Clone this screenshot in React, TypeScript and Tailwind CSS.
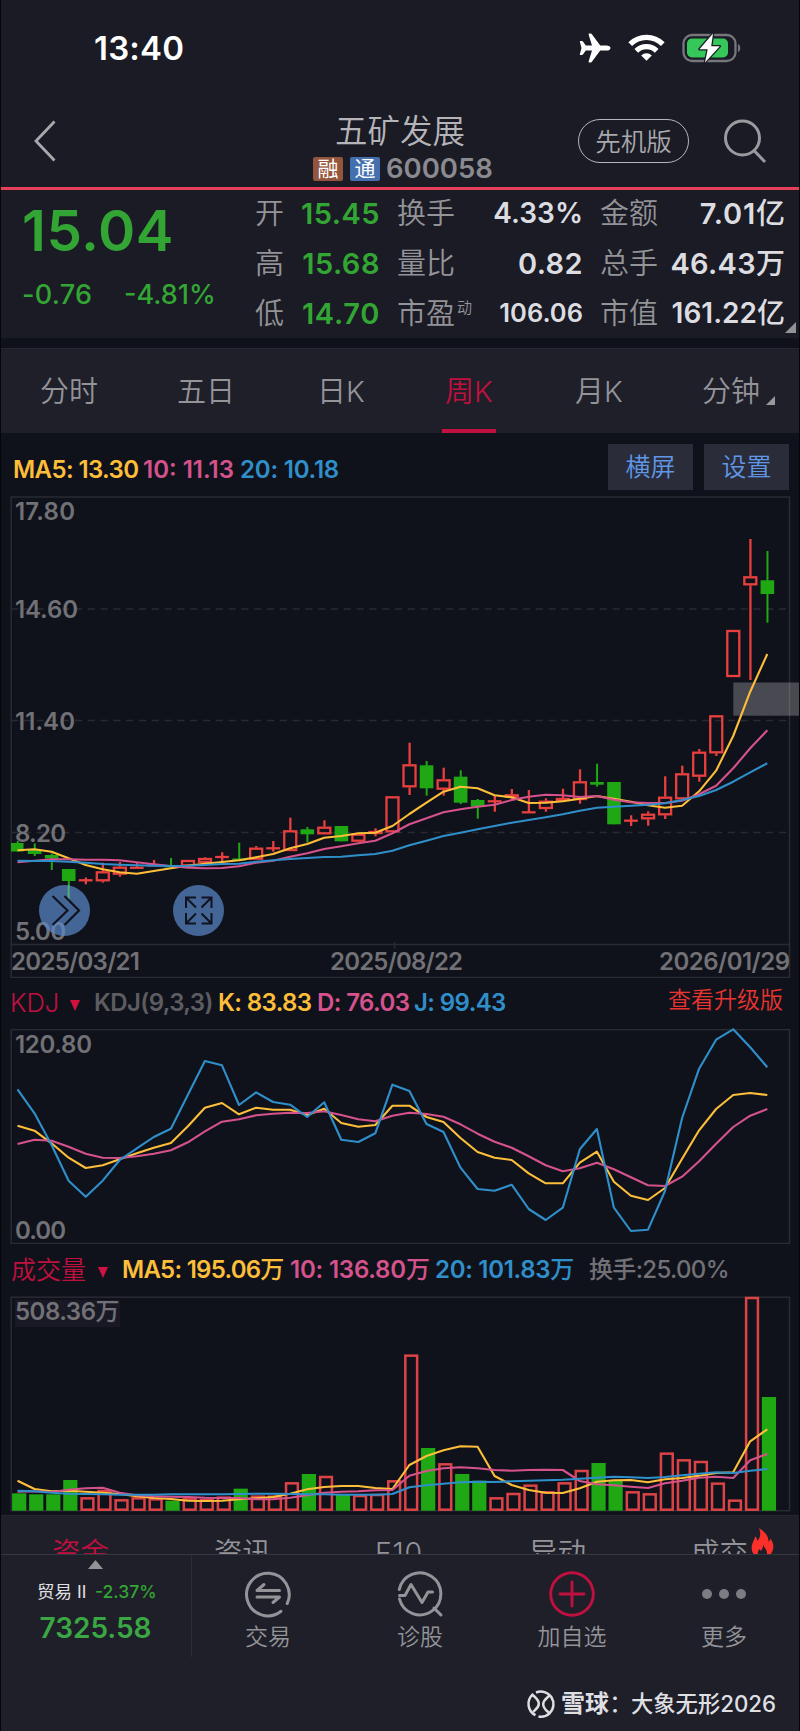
import React from "react";

const UP = "#e8403f";
const DOWN = "#1fa814";
const YELLOW = "#fdbe3a";
const PINK = "#d5528c";
const BLUE = "#2f8fca";

const STEP = 17.04;
const cx = (i: number) => 17.5 + i * STEP;
const vx = (i: number) => 19.1 + i * STEP;

type Candle = ["r" | "g", number, number, number, number];

// kind, high, body top, body bottom, low
const candles: Candle[] = [
  ["g", 841, 843, 851.5, 851.5], ["g", 843.5, 850, 854, 856], ["g", 853.5, 855, 858.5, 870], ["g", 869, 869, 881, 901.5],
  ["r", 877.5, 880.3, 880.3, 884.3], ["r", 862.7, 871.3, 881.3, 882.7], ["r", 862, 866.7, 874.7, 876.7], ["r", 862, 867.8, 867.8, 868],
  ["r", 860, 865.3, 865.3, 866], ["g", 858, 865.3, 865.3, 866], ["r", 860, 860, 866.3, 866.3], ["r", 857.3, 858, 863, 863],
  ["r", 852.3, 857, 857, 861.7], ["g", 842.7, 858.5, 858.5, 860], ["r", 846, 847.7, 859.7, 859.7], ["r", 841, 848.3, 848.3, 851.7],
  ["r", 817.7, 830.3, 851, 851], ["g", 827, 829.3, 834.3, 842.3], ["r", 820.3, 826.7, 834.3, 834.3], ["g", 826, 826, 841.3, 841.3],
  ["r", 833.7, 833.7, 841.7, 841.7], ["r", 828.3, 831, 834, 836.3], ["r", 796.3, 796.3, 832.3, 832.3],
  ["r", 742.7, 764.3, 787.3, 795], ["g", 761, 765.3, 788.3, 795.7], ["r", 767.7, 779.3, 789.7, 795.7], ["g", 770.3, 776.7, 802.7, 804],
  ["g", 799, 800, 806.7, 818.7], ["r", 795.7, 801.3, 801.3, 811.7], ["r", 789, 794.3, 797.7, 799], ["r", 790, 812.3, 812.3, 813],
  ["r", 798.3, 800.7, 809, 811.7], ["r", 788.7, 798, 801, 801], ["r", 769.3, 781.3, 800, 803.7], ["g", 763.7, 782, 784.7, 786.7],
  ["g", 782, 782, 824.3, 824.3], ["r", 815.3, 820.7, 820.7, 826], ["r", 811.3, 813.7, 819.3, 825.7], ["r", 776.3, 796.7, 815.3, 819],
  ["r", 765.7, 773.3, 799.3, 799.3], ["r", 749, 751.7, 776.7, 781.7], ["r", 715.3, 715.3, 753.3, 756], ["r", 630, 630, 677, 677],
  ["r", 539, 576.3, 585.3, 680], ["g", 551, 580.3, 594, 622.7],
];

const priceMa = {
  m5: [451, 448, 455, 475, 495, 508, 517, 521, 513, 505, 497, 491, 486, 481, 472, 462, 445, 432, 413, 408, 400, 398, 378, 342, 308, 275, 260, 265, 286, 292, 309, 308, 304, 296, 288, 296, 305, 316, 323, 317, 274, 212, 108, -25, -138],
  m10: [487, 482, 478, 478, 479, 479, 481, 487, 493, 498, 503, 505, 504, 499, 488, 482, 470, 460, 447, 439, 430, 422, 400, 373, 355, 337, 328, 320, 314, 300, 290, 284, 286, 291, 288, 299, 307, 309, 309, 302, 283, 257, 205, 145, 91],
  m20: [482, 483, 483, 485, 488, 492, 494, 496, 497, 498, 497, 495, 492, 491, 485, 481, 477, 474, 471, 470, 466, 462, 452, 436, 422, 408, 398, 388, 378, 368, 360, 352, 343, 332, 323, 320, 317, 314, 310, 300, 288, 270, 245, 217, 190],
};

const kdj = {
  k: [437, 452, 490, 533, 564, 556, 538, 520, 503, 489, 439, 383, 369, 403, 383, 389, 389, 405, 386, 429, 440, 435, 377, 377, 411, 426, 474, 516, 533, 540, 580, 610, 610, 548, 515, 605, 647, 660, 624, 536, 451, 387, 345, 339, 345],
  d: [492, 479, 482, 500, 521, 533, 534, 529, 521, 511, 487, 454, 425, 418, 406, 401, 398, 399, 394, 405, 418, 424, 407, 398, 402, 410, 433, 461, 485, 503, 529, 556, 574, 565, 548, 568, 592, 616, 618, 590, 544, 491, 441, 407, 387],
  j: [328, 400, 495, 602, 650, 602, 540, 505, 471, 446, 344, 243, 256, 375, 337, 366, 374, 411, 367, 479, 486, 460, 314, 333, 432, 456, 563, 627, 632, 614, 687, 720, 683, 508, 447, 683, 753, 749, 633, 414, 266, 179, 148, 202, 262],
};

const volumes: ["r" | "g", number][] = [
  ["g", 670], ["g", 673], ["g", 673], ["g", 630], ["r", 682], ["r", 660], ["r", 688], ["r", 682], ["r", 685], ["g", 692], ["r", 685], ["r", 687],
  ["r", 680], ["g", 656], ["r", 677], ["r", 677], ["r", 637], ["g", 612], ["r", 618], ["g", 672], ["r", 675], ["r", 672], ["r", 631], ["r", 254],
  ["g", 534], ["r", 580], ["g", 612], ["g", 632], ["r", 682], ["r", 669], ["r", 644], ["r", 664], ["r", 637], ["r", 600], ["g", 579], ["g", 630],
  ["r", 664], ["r", 670], ["r", 548], ["r", 568], ["r", 573], ["r", 638], ["r", 689], ["r", 81], ["g", 381],
];

const volMa = {
  m5: [632, 657, 664, 662, 665, 668, 672, 679, 684, 687, 692, 693, 692, 688, 685, 681, 671, 658, 651, 648, 648, 654, 657, 585, 558, 541, 529, 530, 618, 645, 660, 668, 669, 655, 635, 631, 630, 637, 628, 624, 617, 609, 607, 514, 478],
  m10: [665, 664, 666, 659, 655, 653, 668, 676, 679, 680, 681, 683, 684, 684, 688, 688, 683, 676, 668, 665, 664, 661, 660, 617, 603, 595, 592, 595, 600, 602, 600, 599, 600, 633, 643, 646, 650, 654, 640, 632, 623, 620, 624, 571, 552],
  m20: [662, 664, 668, 671, 672, 673, 674, 674, 674, 673, 673, 673, 673, 672, 671, 671, 672, 673, 673, 674, 674, 674, 672, 652, 646, 641, 637, 635, 636, 634, 632, 631, 629, 626, 623, 620, 622, 624, 621, 616, 611, 607, 609, 602, 597],
};

const path = (values: number[], base: number) =>
  values.map((v, i) => `${i ? "L" : "M"}${cx(i).toFixed(1)} ${(base + v / 3).toFixed(1)}`).join("");

const Line = ({ values, base, color }: { values: number[]; base: number; color: string }) => (
  <path d={path(values, base)} fill="none" stroke={color} strokeWidth="2.100" strokeLinejoin="round" />
);

const Axis = ({ x, y, children, len }: { x: number; y: number; children: React.ReactNode; len: number }) => (
  <text x={x} y={y} textLength={len} className="fill-[#717176] text-[24px] font-semibold">
    {children}
  </text>
);

const StatusBar = () => (
  <div className="flex h-[96px] items-center pl-[94px] pr-[58px]">
    <span className="grow text-[33px] font-semibold leading-none tracking-[0.200px] text-white">13:40</span>
    <svg width="32" height="30" viewBox="0 0 32 30" fill="#fff">
      <path d="M31.5 15c0 1.7-1.8 2.6-4 2.6h-6.3l-8.3 11.2c-.3.4-.7.6-1.2.6h-1.5c-.5 0-.7-.4-.6-.9l3.4-10.9H6.800l-2.900 4c-.2.3-.5.5-.9.500H1.300c-.4 0-.6-.3-.5-.7L2.500 15 .8 8.600c-.1-.4.1-.7.5-.7H3c.4 0 .7.200.9.500l2.900 4H13L9.600 1.500c-.1-.5.1-.9.6-.9h1.500c.5 0 .9.200 1.200.6l8.300 11.200h6.300c2.200 0 4 .9 4 2.600z" />
    </svg>
    <svg className="ml-[17px]" width="37" height="28" viewBox="0 0 37 28" fill="none" stroke="#fff" strokeWidth="5.200">
      <path d="M2.200 10.200a23 23 0 0 1 32.600 0" />
      <path d="M8.300 16.800a14.500 14.500 0 0 1 20.400 0" />
      <path d="M18.500 26.800l-5.300-5.400a7.600 7.600 0 0 1 10.600 0z" fill="#fff" stroke="none" />
    </svg>
    <svg className="ml-[17px]" width="60" height="32" viewBox="0 0 60 32">
      <rect x="1.500" y="3" width="52" height="26" rx="8.500" fill="none" stroke="#77767d" strokeWidth="2.300" />
      <path d="M56 12c3 1.200 3 7 0 8.200z" fill="#77767d" />
      <rect x="5" y="6.500" width="41" height="19" rx="5" fill="#35c759" />
      <path d="M31 1.500L17.500 17.200h8.200L23 30.500 37.800 14.200h-8.600z" fill="#fff" stroke="#1b1c25" strokeWidth="2.600" paintOrder="stroke" strokeLinejoin="round" />
    </svg>
  </div>
);

const Header = () => (
  <header className="flex h-[91px] items-start">
    <svg className="ml-[33px] mt-[23px]" width="24" height="44" viewBox="0 0 24 44" fill="none" stroke="#a9a9ad" strokeWidth="2.800">
      <path d="M21.500 2.500L3 22l18.500 19.500" />
    </svg>
    <div className="ml-[243px] flex w-[200px] flex-col items-center pt-[17px]">
      <h1 className="text-[32.500px] font-[350] leading-[38px] text-[#b5b5b9]">五矿发展</h1>
      <div className="mt-[4px] flex h-[27px] w-full items-center whitespace-nowrap pl-[13px]">
        <span className="flex h-[24px] w-[30px] items-center justify-center rounded-[2px] bg-[#93563c] text-[21px] leading-none text-white">融</span>
        <span className="ml-[7px] flex h-[24px] w-[30px] items-center justify-center rounded-[2px] bg-[#4470b0] text-[21px] leading-none text-white">通</span>
        <span className="ml-[6px] text-[27.500px] font-semibold leading-none text-[#8a8a8f]">600058</span>
      </div>
    </div>
    <div className="ml-[78px] mt-[23px] flex h-[44px] w-[111px] items-center justify-center rounded-full border-[1.500px] border-[#b5b5ba] pt-[2px] text-[25.500px] font-[350] text-[#a8a8ad]">
      先机版
    </div>
    <svg className="ml-[33px] mt-[22px]" width="46" height="46" viewBox="0 0 46 46" fill="none" stroke="#9a9a9f" strokeWidth="3">
      <circle cx="20.500" cy="20" r="17" />
      <path d="M32 32.500L43 44" />
    </svg>
  </header>
);

const Metric = ({ label, sup, value, unit, labelW, w, className }: { label: string; sup?: string; value: string; unit?: string; labelW: string; w: string; className: string }) => (
  <div className={`flex h-[50px] items-center whitespace-nowrap ${w}`}>
    <span className={`text-[29px] font-[350] leading-none text-[#939398] ${labelW}`}>{label}</span>
    {sup && <span className="-mt-[12px] text-[15px] font-[350] leading-none text-[#939398]">{sup}</span>}
    <span className={`grow text-right font-semibold leading-none ${className}`}>
      {value}
      {unit && <span className="font-medium tracking-normal">{unit}</span>}
    </span>
  </div>
);

const Quote = () => (
  <section className="relative flex h-[151px] border-t-[3px] border-[#e63f5c]">
    <div className="w-[255px] pl-[22px] pt-[13px] font-semibold text-[#33a534]">
      <div className="text-[56.500px] leading-[56px] tracking-[0.500px]">15.04</div>
      <div className="mt-[22px] flex text-[27px] font-medium leading-[28px]">
        <span className="w-[102px] tracking-[0.300px]">-0.76</span>
        <span>-4.81%</span>
      </div>
    </div>
    <div className="-mt-[2px] w-[125px]">
      <Metric label="开" value="15.45" labelW="w-[30px]" w="w-[125px]" className="text-[29px] tracking-[0.500px] text-[#33a534]" />
      <Metric label="高" value="15.68" labelW="w-[30px]" w="w-[125px]" className="text-[29px] tracking-[0.500px] text-[#33a534]" />
      <Metric label="低" value="14.70" labelW="w-[30px]" w="w-[125px]" className="text-[29px] tracking-[0.700px] text-[#33a534]" />
    </div>
    <div className="-mt-[2px] ml-[17px] w-[186px]">
      <Metric label="换手" value="4.33%" labelW="w-[60px]" w="w-[186px]" className="text-[28px] text-[#dddde1]" />
      <Metric label="量比" value="0.82" labelW="w-[60px]" w="w-[186px]" className="text-[29px] tracking-[0.400px] text-[#dddde1]" />
      <Metric label="市盈" sup="动" value="106.06" labelW="w-[60px]" w="w-[186px]" className="text-[25.500px] text-[#dddde1]" />
    </div>
    <div className="-mt-[2px] ml-[17px] w-[185px]">
      <Metric label="金额" value="7.01" unit="亿" labelW="w-[58px]" w="w-[185px]" className="text-[29px] tracking-[0.800px] text-[#dddde1]" />
      <Metric label="总手" value="46.43" unit="万" labelW="w-[58px]" w="w-[185px]" className="text-[29px] tracking-[0.300px] text-[#dddde1]" />
      <Metric label="市值" value="161.22" unit="亿" labelW="w-[58px]" w="w-[185px]" className="text-[28px] text-[#dddde1]" />
    </div>
    <svg className="absolute bottom-[5px] right-[4px]" width="11" height="11" viewBox="0 0 11 11">
      <path d="M11 0v11H0z" fill="#929297" />
    </svg>
  </section>
);

const Tabs = () => (
  <nav className="flex h-[85px] border-t border-[#252733] bg-[#1e1f29] text-[29px] font-[350] text-[#939398]">
    <div className="flex w-[138px] items-center justify-center pt-[1px]">分时</div>
    <div className="flex w-[136px] items-center justify-center pt-[1px]">五日</div>
    <div className="flex w-[134px] items-center justify-center pt-[1px]">日K</div>
    <div className="flex w-[122px] flex-col items-center text-[#c0103f]">
      <span className="flex h-[80px] items-center pt-[5px]">周K</span>
      <span className="h-[4px] w-[54px] bg-[#c0103f]" />
    </div>
    <div className="flex w-[138px] items-center justify-center pt-[1px]">月K</div>
    <div className="flex items-center pl-[34px] pt-[1px]">
      分钟
      <svg className="ml-[6px] mt-[17px]" width="9" height="9" viewBox="0 0 9 9">
        <path d="M9 0v9H0z" fill="#98989d" />
      </svg>
    </div>
  </nav>
);

const PriceChart = () => (
  <div className="relative h-[482px]">
    <svg className="block" width="800" height="482" viewBox="0 496 800 482">
      <rect x="11.200" y="497" width="778.300" height="480.500" fill="none" stroke="#292b33" strokeWidth="1.500" />
      <path d="M11 944.500H789M394.500 942V949" stroke="#292b33" strokeWidth="1.500" />
      <path d="M11 609H789M11 720.500H789M11 832.500H789" stroke="#292b33" strokeWidth="1.500" strokeDasharray="7 5.800" />
      <rect x="733.300" y="682.500" width="66" height="33.200" fill="#fff" fillOpacity="0.240" />
      {candles.map(([kind, hi, top, bot, lo], i) => {
        const x = cx(i);
        if (kind === "g") {
          const h = Math.max(bot - top, 2);
          return (
            <g key={i} fill={DOWN}>
              <rect x={x - 0.8} y={hi} width="2" height={lo - hi} />
              <rect x={i ? x - 6.700 : 11} y={top} width={i ? 13.600 : 12.500} height={h} />
            </g>
          );
        }
        const flat = bot - top < 1;
        return (
          <g key={i} stroke={UP} strokeWidth="2.300" fill="none">
            {hi < top && <path d={`M${x + 0.200} ${hi}V${top}`} />}
            {lo > bot && <path d={`M${x + 0.200} ${bot}V${lo}`} />}
            {flat ? <path d={`M${x - 6.900} ${top}H${x + 6.900}`} /> : <rect x={x - 5.900} y={top + 1} width="12" height={Math.max(bot - top - 2, 1)} />}
          </g>
        );
      })}
      <Line values={priceMa.m5} base={700} color={YELLOW} />
      <Line values={priceMa.m10} base={700} color={PINK} />
      <Line values={priceMa.m20} base={700} color={BLUE} />
      <Axis x={15} y={520} len={60}>17.80</Axis>
      <Axis x={15} y={618} len={63}>14.60</Axis>
      <Axis x={15} y={729.500} len={60}>11.40</Axis>
      <Axis x={15} y={841.500} len={51}>8.20</Axis>
      <Axis x={15} y={940} len={51}>5.00</Axis>
      <Axis x={11} y={970} len={129}>2025/03/21</Axis>
      <Axis x={330} y={970} len={133}>2025/08/22</Axis>
      <Axis x={659} y={970} len={131}>2026/01/29</Axis>
    </svg>
    <button className="absolute left-[39px] top-[389px] flex size-[51px] items-center justify-center rounded-full bg-[#5b8acb]/70">
      <svg width="51" height="51" viewBox="0 0 51 51" fill="none" stroke="#10131f" strokeWidth="2.200">
        <path d="M29.500 0V16.500" stroke="#4fae72" strokeWidth="1.500" />
        <path d="M13.500 11L28.500 25.500L13.500 40M25.500 11L40 25.500L25.500 40" />
      </svg>
    </button>
    <button className="absolute left-[173px] top-[389px] flex size-[51px] items-center justify-center rounded-full bg-[#5b8acb]/70">
      <svg width="51" height="51" viewBox="0 0 51 51" fill="none" stroke="#10131f" strokeWidth="2">
        <path d="M23 12.500H13V23M13 12.500L23 22.500M28.500 12.500H38.500V23M38.500 12.500L28.500 22.500M23 38.500H13V28M13 38.500L23 28.500M28.500 38.500H38.500V28M38.500 38.500L28.500 28.500" />
      </svg>
    </button>
  </div>
);

const KdjChart = () => (
  <svg className="block" width="800" height="216" viewBox="0 1028 800 216">
    <rect x="11.200" y="1029.700" width="778.300" height="213.700" fill="none" stroke="#292b33" strokeWidth="1.500" />
    <Line values={kdj.k} base={980} color={YELLOW} />
    <Line values={kdj.d} base={980} color={PINK} />
    <Line values={kdj.j} base={980} color={BLUE} />
    <Axis x={15} y={1052.700} len={77}>120.80</Axis>
    <Axis x={15} y={1239} len={51}>0.00</Axis>
  </svg>
);

const VolumeChart = () => (
  <svg className="block" width="800" height="216" viewBox="0 1296 800 216">
    <rect x="11.200" y="1297.200" width="778.300" height="213.500" fill="none" stroke="#292b33" strokeWidth="1.500" />
    <rect x="15" y="1300" width="105" height="27" fill="#181924" />
    {volumes.map(([kind, v], i) => {
      const y = 1270 + v / 3;
      const x = vx(i);
      return kind === "g" ? (
        <rect key={i} x={x - 7} y={y} width="14.200" height={1510.700 - y} fill={DOWN} />
      ) : (
        <rect key={i} x={x - 5.700} y={y + 1} width="11.800" height={1508.700 - y} fill="none" stroke="#dc4347" strokeWidth="2.500" />
      );
    })}
    <Line values={volMa.m5} base={1270} color={YELLOW} />
    <Line values={volMa.m10} base={1270} color={PINK} />
    <Line values={volMa.m20} base={1270} color={BLUE} />
    <Axis x={15} y={1320} len={104.5}>
      508.36<tspan className="font-medium">万</tspan>
    </Axis>
  </svg>
);

const Caret = ({ className }: { className: string }) => (
  <svg className={className} width="10" height="11" viewBox="0 0 10 11">
    <path d="M0 0h10L5 11z" fill="#cf123f" />
  </svg>
);

const NavItem = ({ label, children }: { label: string; children: React.ReactNode }) => (
  <div className="flex w-[152px] flex-col items-center pt-[14px]">
    <svg width="50" height="50" viewBox="-25 -25 50 50" fill="none">
      {children}
    </svg>
    <span className="mt-[5px] text-[23px] font-[350] leading-[26px] text-[#939398]">{label}</span>
  </div>
);

const BottomTabs = () => (
  <div className="flex h-[39px] overflow-hidden border-t border-[#242630] bg-[#1e1f29] pt-[16px] text-[28.500px] font-[350] leading-[42px] text-[#939398]">
    <span className="w-[161px] pl-[52px] text-[#c0103f]">资金</span>
    <span className="w-[161px] pl-[53px]">资讯</span>
    <span className="w-[155px] pl-[53px] tracking-[0.700px]">F10</span>
    <span className="w-[161px] pl-[52px]">异动</span>
    <span className="w-[111px] pl-[53px]">成交</span>
    <svg className="ml-[2px] -mt-[4px]" width="23" height="31" viewBox="0 0 23 31">
      <path d="M8 0c6 4 10 8 9.300 13.500 1.200-.6 1.800-1.600 2-3C22 14 23 17.500 22 21.500 21 26 17 30 11.500 30 5 30 1 26 .7 20.500.5 15.500 3 13 4.200 8.500c1.300 1 2 2.400 2 4.300C9.500 10 10.200 5 8 0z" fill="#fb302b" />
      <path d="M12 16c.5 3.500 4 5 4 9 0 3-2 5-4.600 5S6.500 28 6.700 25.500c.1-2 1-3 1.600-4.500.8.500 1.200 1.200 1.300 2 1.900-1.600 2.800-4 2.400-7z" fill="#1e1f29" />
    </svg>
  </div>
);

const BottomBar = () => (
  <footer className="flex h-[103px] border-t border-[#353741] bg-[#1e1f29]">
    <div className="flex w-[191px] flex-col items-center">
      <svg className="mt-[5px]" width="15" height="9" viewBox="0 0 15 9">
        <path d="M7.500 0L15 9H0z" fill="#929297" />
      </svg>
      <div className="mt-[10px] flex w-full items-center pl-[37px] text-[17.500px] leading-[26px]">
        <span className="w-[58px] text-[#e0e0e4]">贸易 Ⅱ</span>
        <span className="text-[17.500px] font-medium text-[#33a534]">-2.37%</span>
      </div>
      <div className="mt-[8px] text-[28px] font-semibold leading-[30px] text-[#3aa744]">7325.58</div>
    </div>
    <div className="w-px bg-[#2b2d37]" />
    <NavItem label="交易">
      <path d="M13 17.300A21.300 21.300 0 1 1 19.200 9.500" stroke="#939398" strokeWidth="3" strokeLinecap="round" />
      <path d="M11.500-3.500H-11L-4-9.500M-11 3H11.500L5 8.500" stroke="#939398" strokeWidth="3" strokeLinecap="round" strokeLinejoin="round" />
    </NavItem>
    <NavItem label="诊股">
      <path d="M-20.500 5A21 21 0 1 0-20.700-4.500" stroke="#939398" strokeWidth="3" strokeLinecap="round" />
      <path d="M-20.500 1.500H-15L-9-9.500L2 8.500L8-2H12.500M14 14L21 21" stroke="#939398" strokeWidth="3" strokeLinecap="round" strokeLinejoin="round" />
    </NavItem>
    <NavItem label="加自选">
      <circle r="21.300" stroke="#c0103f" strokeWidth="2.900" />
      <path d="M-12 0H12M0-12V12" stroke="#c0103f" strokeWidth="2.900" strokeLinecap="round" />
    </NavItem>
    <NavItem label="更多">
      <g fill="#7c7c82">
        <circle cx="-17" r="5" />
        <circle r="5" />
        <circle cx="17" r="5" />
      </g>
    </NavItem>
  </footer>
);

const Watermark = () => (
  <div className="flex grow items-start bg-[#1e1f29] pl-[526px] pt-[32px] text-[#dfdfe2]">
    <svg width="30" height="30" viewBox="0 0 30 30" fill="none" stroke="#dfdfe2" strokeWidth="2.500">
      <path d="M9.500 26.200A12.600 12.600 0 0 1 6.500 5.700C8 7.500 12.800 10 12.800 14.800C12.800 19 9.500 20.500 7.200 22.800" />
      <path d="M10 3.500A12.600 12.600 0 0 1 23.500 24.300C22 22.500 17.200 20 17.200 15.200C17.200 11 20.500 9.500 22.800 7.200" />
      <path d="M12.500 27.400A12.600 12.600 0 0 0 23.500 24.300" />
    </svg>
    <span className="ml-[5px] w-[70px] whitespace-nowrap text-[24px] font-bold leading-[30px]">
      雪球<span className="font-normal">：</span>
    </span>
    <span className="whitespace-nowrap text-[22.300px] font-medium leading-[30px]">大象无形2026</span>
  </div>
);

export default function App() {
  return (
    <div className="flex h-[1731px] w-[800px] flex-col overflow-hidden border-x border-[#05060a] bg-[#1a1b24] [font-family:Inter,'Noto_Sans_CJK_SC',sans-serif]">
      <div className="-mx-px flex grow flex-col">
        <StatusBar />
        <Header />
        <Quote />
        <div className="h-[10px] bg-[#10121b]" />
        <Tabs />
        <main className="h-[1082px] bg-[#10121b]">
          <div className="flex h-[63px] items-start whitespace-nowrap pl-[13px] pt-[11px]">
            <div className="flex h-[52px] w-[595px] items-center text-[24px] font-semibold leading-none">
              <span className="w-[130px] tracking-[-0.600px] text-[#fdbe3a]">MA5: 13.30</span>
              <span className="w-[97px] text-[#d5528c]">10: 11.13</span>
              <span className="tracking-[-0.200px] text-[#2f8fca]">20: 10.18</span>
            </div>
            <button className="h-[46px] w-[85px] bg-[#2b2c39] text-[25px] font-[350] leading-[44px] text-[#5f97e6]">横屏</button>
            <button className="ml-[11px] h-[46px] w-[85px] bg-[#2b2c39] text-[25px] font-[350] leading-[44px] text-[#5f97e6]">设置</button>
          </div>
          <PriceChart />
          <div className="flex h-[50px] items-center whitespace-nowrap pl-[10px] text-[24px] font-semibold leading-none">
            <span className="w-[60px] text-[25.500px] font-light text-[#c0103f]">KDJ</span>
            <Caret className="mt-[4px]" />
            <span className="ml-[14px] w-[124px] tracking-[-0.600px] text-[#5c5c61]">KDJ(9,3,3)</span>
            <span className="w-[99px] tracking-[-0.600px] text-[#fdbe3a]">K: 83.83</span>
            <span className="w-[97px] tracking-[-0.600px] text-[#d5528c]">D: 76.03</span>
            <span className="w-[254px] tracking-[-0.600px] text-[#2f8fca]">J: 99.43</span>
            <span className="-mt-[6px] text-[23px] font-[350] text-[#ea3430]">查看升级版</span>
          </div>
          <KdjChart />
          <div className="flex h-[52px] items-center whitespace-nowrap pl-[11px] text-[24px] font-semibold leading-none">
            <span className="w-[87px] text-[25px] font-[350] text-[#c0103f]">成交量</span>
            <Caret className="mt-[5px]" />
            <span className="ml-[14px] w-[168px] tracking-[-0.750px] text-[#fdbe3a]">
              MA5: 195.06<span className="font-medium">万</span>
            </span>
            <span className="w-[145px] tracking-[-0.200px] text-[#d5528c]">
              10: 136.80<span className="font-medium">万</span>
            </span>
            <span className="w-[154px] tracking-[-0.300px] text-[#2f8fca]">
              20: 101.83<span className="font-medium">万</span>
            </span>
            <span className="font-medium tracking-[-0.650px] text-[#717176]">换手:25.00%</span>
          </div>
          <VolumeChart />
        </main>
        <BottomTabs />
        <BottomBar />
        <Watermark />
      </div>
    </div>
  );
}
